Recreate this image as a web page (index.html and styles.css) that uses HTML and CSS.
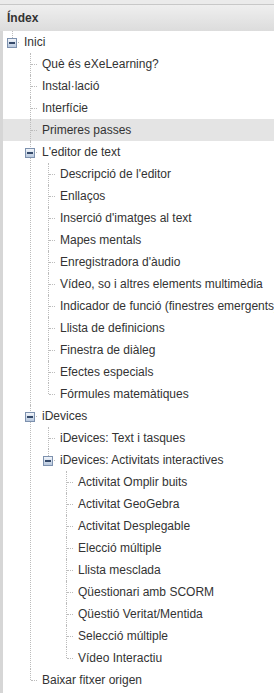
FILE: index.html
```html
<!DOCTYPE html>
<html lang="ca">
<head>
<meta charset="utf-8">
<title>Índex</title>
<link rel="stylesheet" href="styles.css">
</head>
<body>
<div class="panel-top"></div>
<div class="panel-head">Índex</div>
<div class="tree-wrap">
<ul class="tree">
	<li class="last open">
		<div class="node"><span class="toggle"><svg width="10" height="10" viewBox="0 0 10 10"><defs><linearGradient id="g0" x1="0" y1="0" x2="0" y2="1"><stop offset="0" stop-color="#f5f8fc"/><stop offset="1" stop-color="#b4c5dc"/></linearGradient></defs><rect x="0.5" y="0.5" width="9" height="9" fill="url(#g0)" stroke="#7d91ae"/><rect x="2" y="4" width="6" height="2" fill="#34496a"/></svg></span>Inici</div>
		<ul>
			<li><div class="node">Què és eXeLearning?</div></li>
			<li><div class="node">Instal·lació</div></li>
			<li><div class="node">Interfície</div></li>
			<li><div class="node current">Primeres passes</div></li>
			<li class="open">
				<div class="node"><span class="toggle"><svg width="10" height="10" viewBox="0 0 10 10"><rect x="0.5" y="0.5" width="9" height="9" fill="url(#g0)" stroke="#7d91ae"/><rect x="2" y="4" width="6" height="2" fill="#34496a"/></svg></span>L'editor de text</div>
				<ul>
					<li><div class="node">Descripció de l'editor</div></li>
					<li><div class="node">Enllaços</div></li>
					<li><div class="node">Inserció d'imatges al text</div></li>
					<li><div class="node">Mapes mentals</div></li>
					<li><div class="node">Enregistradora d'àudio</div></li>
					<li><div class="node">Vídeo, so i altres elements multimèdia</div></li>
					<li><div class="node">Indicador de funció (finestres emergents)</div></li>
					<li><div class="node">Llista de definicions</div></li>
					<li><div class="node">Finestra de diàleg</div></li>
					<li><div class="node">Efectes especials</div></li>
					<li class="last"><div class="node">Fórmules matemàtiques</div></li>
				</ul>
			</li>
			<li class="open">
				<div class="node"><span class="toggle"><svg width="10" height="10" viewBox="0 0 10 10"><rect x="0.5" y="0.5" width="9" height="9" fill="url(#g0)" stroke="#7d91ae"/><rect x="2" y="4" width="6" height="2" fill="#34496a"/></svg></span>iDevices</div>
				<ul>
					<li><div class="node">iDevices: Text i tasques</div></li>
					<li class="last open">
						<div class="node"><span class="toggle"><svg width="10" height="10" viewBox="0 0 10 10"><rect x="0.5" y="0.5" width="9" height="9" fill="url(#g0)" stroke="#7d91ae"/><rect x="2" y="4" width="6" height="2" fill="#34496a"/></svg></span>iDevices: Activitats interactives</div>
						<ul>
							<li><div class="node">Activitat Omplir buits</div></li>
							<li><div class="node">Activitat GeoGebra</div></li>
							<li><div class="node">Activitat Desplegable</div></li>
							<li><div class="node">Elecció múltiple</div></li>
							<li><div class="node">Llista mesclada</div></li>
							<li><div class="node">Qüestionari amb SCORM</div></li>
							<li><div class="node">Qüestió Veritat/Mentida</div></li>
							<li><div class="node">Selecció múltiple</div></li>
							<li class="last"><div class="node">Vídeo Interactiu</div></li>
						</ul>
					</li>
				</ul>
			</li>
			<li class="last"><div class="node">Baixar fitxer origen</div></li>
		</ul>
	</li>
</ul>
</div>
</body>
</html>
```
FILE: styles.css
```css
body {
	margin: 0;
	width: 274px;
	height: 693px;
	overflow: hidden;
	background: #fff;
	font-family: "Liberation Sans", Arial, sans-serif;
	font-size: 12px;
	color: #333;
}

.panel-top {
	height: 4px;
	background: #ebebeb;
	border-bottom: 1px solid #c8c8c8;
}

.panel-head {
	height: 26px;
	display: flex;
	align-items: center;
	padding-left: 7px;
	font-weight: bold;
	background: linear-gradient(#efefef, #dcdcdc);
}

.tree-wrap {
	height: 662px;
	border-left: 3px solid #d6d6d6;
}

ul {
	list-style: none;
	margin: 0;
	padding: 0;
}

ul ul {
	padding-left: 18px;
}

li {
	position: relative;
}

/* dotted tree lines */
li::before {
	content: "";
	position: absolute;
	left: 9px;
	top: 0;
	bottom: 0;
	border-left: 1px dotted #bcbcbc;
}

li.last::before {
	bottom: auto;
	height: 11px;
}

li::after {
	content: "";
	position: absolute;
	left: 10px;
	top: 11px;
	width: 6px;
	border-top: 1px dotted #bcbcbc;
}

.node {
	height: 22px;
	display: flex;
	align-items: center;
	padding-left: 21px;
	white-space: nowrap;
}

.node.current {
	background: #e4e4e4;
	margin-left: -18px;
	padding-left: 39px;
}

.toggle {
	position: absolute;
	left: 4px;
	top: 7px;
	width: 10px;
	height: 10px;
	z-index: 1;
}

.toggle svg {
	display: block;
}
```
